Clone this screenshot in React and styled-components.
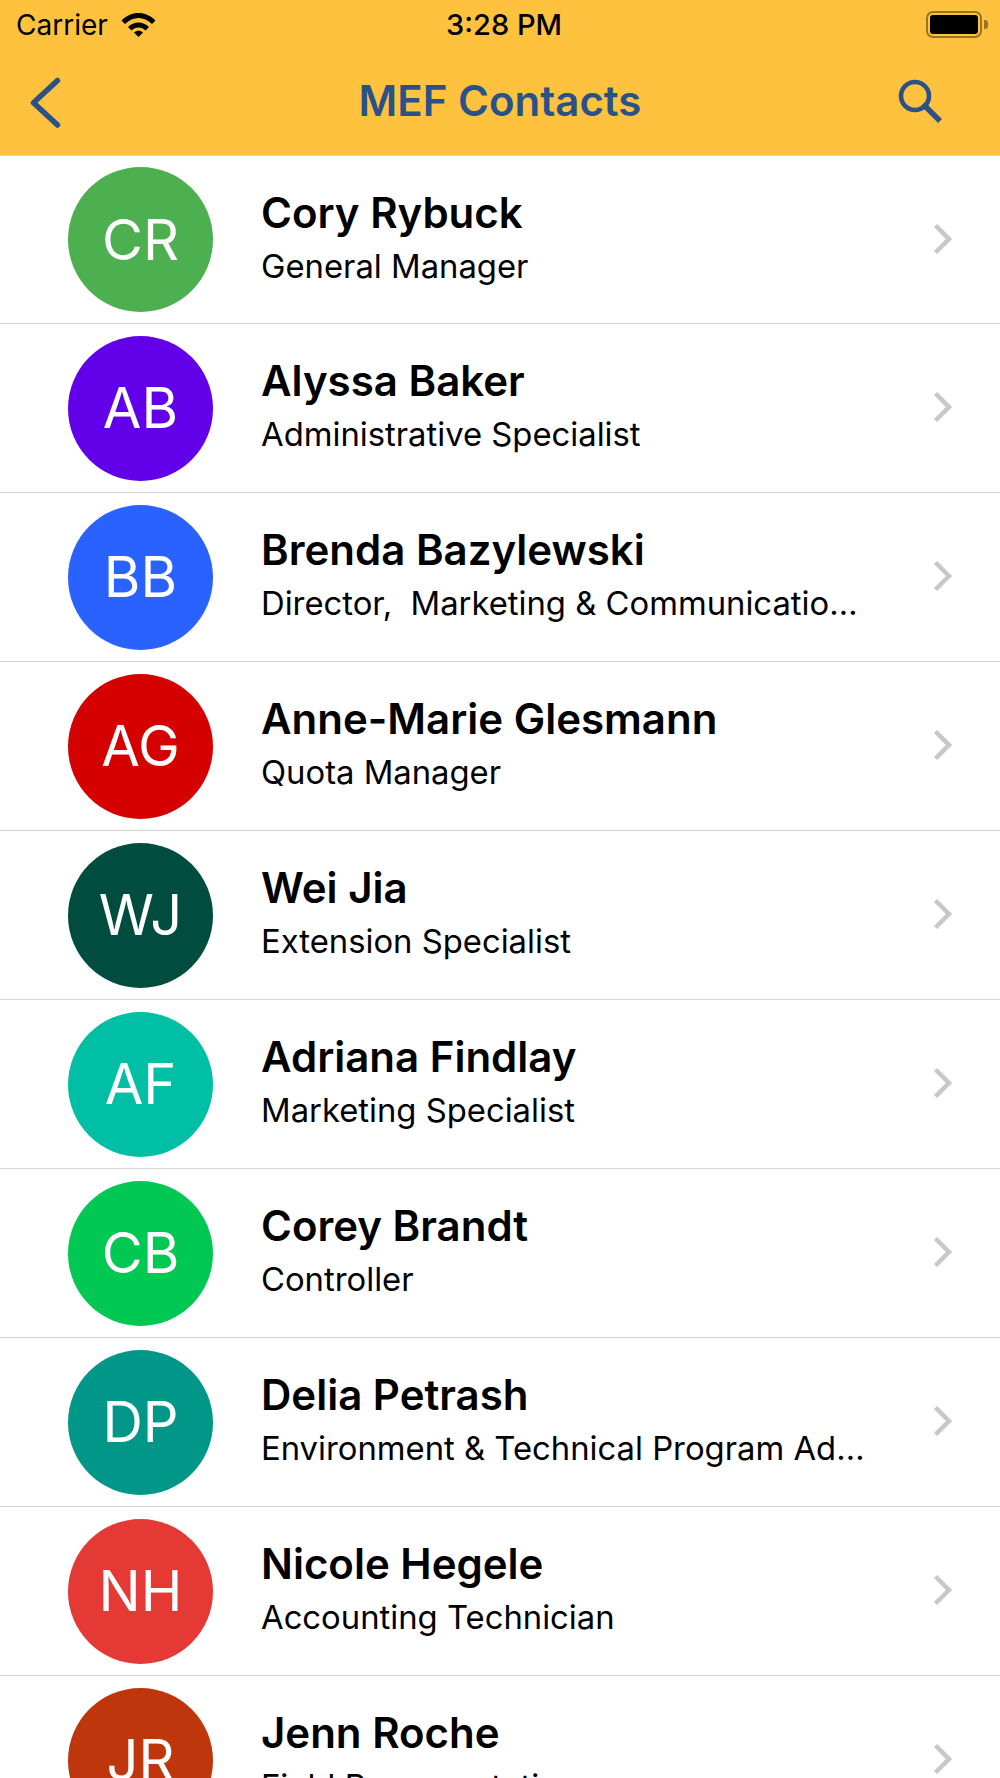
import React from 'react';
import styled, { createGlobalStyle } from 'styled-components';

const GlobalStyle = createGlobalStyle`
  html, body {
    margin: 0;
    height: 100%;
    overflow: hidden;
    background: #ffffff;
    font-family: Inter, "Liberation Sans", sans-serif;
  }
`;

const Screen = styled.div`
  width: 1000px;
  height: 1778px;
  overflow: hidden;
`;

const Header = styled.header`
  height: 155px;
  background: #ffc23f;
  border-bottom: 1px solid #d6d3cb;
`;

const StatusBar = styled.div`
  height: 49px;
  display: grid;
  grid-template-columns: 1fr auto 1fr;
  align-items: center;
  padding: 0 12px 0 16px;
  color: #000000;
`;

const Carrier = styled.div`
  display: flex;
  align-items: center;
  gap: 13px;
  font-size: 28px;
`;

const Clock = styled.div`
  margin-left: 4px;
  font-size: 29px;
  font-weight: 500;
`;

const Battery = styled.div`
  justify-self: end;
  display: flex;
  align-items: center;
  gap: 2px;
`;

const BatteryBody = styled.div`
  box-sizing: border-box;
  width: 56px;
  height: 27px;
  padding: 2px;
  border: 2px solid #9a7526;
  border-radius: 7px;

  &::before {
    content: '';
    display: block;
    height: 100%;
    background: #000000;
    border-radius: 3px;
  }
`;

const BatteryCap = styled.div`
  width: 4px;
  height: 9px;
  background: #9a7526;
  border-radius: 0 3px 3px 0;
`;

const NavBar = styled.nav`
  height: 105px;
  display: grid;
  grid-template-columns: 1fr auto 1fr;
  align-items: center;
  padding: 0 29px 2px;
  box-sizing: border-box;
  color: #2a5289;
`;

const Title = styled.h1`
  margin: 0;
  font-size: 42px;
  font-weight: 600;
`;

const SearchButton = styled.div`
  justify-self: end;
  display: flex;
  margin-right: 29px;
`;

const BackButton = styled.div`
  display: flex;
`;

const List = styled.ul`
  list-style: none;
  margin: 0;
  padding: 0;
`;

const Row = styled.li`
  box-sizing: border-box;
  height: 169px;
  display: flex;
  align-items: center;
  padding: 0 47px 0 68px;
  border-bottom: 1px solid #d4d4d4;

  &:first-child {
    height: 168px;
  }
`;

const Avatar = styled.div`
  flex: none;
  width: 145px;
  height: 145px;
  border-radius: 50%;
  background: ${(p) => p.$color};
  color: #ffffff;
  font-size: 56px;
  display: flex;
  align-items: center;
  justify-content: center;
`;

const Info = styled.div`
  flex: 1;
  min-width: 0;
  margin-left: 48px;
  padding: 0 68px 7px 0;
`;

const Name = styled.div`
  font-size: 42px;
  font-weight: 600;
  line-height: 52px;
  color: #000000;
`;

const Role = styled.div`
  margin-top: 7px;
  font-size: 32.8px;
  line-height: 40px;
  color: #000000;
  white-space: pre;
  overflow: hidden;
  text-overflow: ellipsis;
`;

const Chevron = styled.svg`
  flex: none;
  margin-bottom: 2px;
`;

const contacts = [
  { initials: 'CR', name: 'Cory Rybuck', role: 'General Manager', color: '#4caf50' },
  { initials: 'AB', name: 'Alyssa Baker', role: 'Administrative Specialist', color: '#6200ea' },
  { initials: 'BB', name: 'Brenda Bazylewski', role: 'Director,  Marketing & Communications', color: '#2962ff' },
  { initials: 'AG', name: 'Anne-Marie Glesmann', role: 'Quota Manager', color: '#d50000' },
  { initials: 'WJ', name: 'Wei Jia', role: 'Extension Specialist', color: '#004d40' },
  { initials: 'AF', name: 'Adriana Findlay', role: 'Marketing Specialist', color: '#00bfa5' },
  { initials: 'CB', name: 'Corey Brandt', role: 'Controller', color: '#00c853' },
  { initials: 'DP', name: 'Delia Petrash', role: 'Environment & Technical Program Administrator', color: '#009688' },
  { initials: 'NH', name: 'Nicole Hegele', role: 'Accounting Technician', color: '#e53935' },
  { initials: 'JR', name: 'Jenn Roche', role: 'Field Representative', color: '#bf360c' },
];

const App = () => {
  return (
    <Screen>
      <GlobalStyle />
      <Header>
        <StatusBar>
          <Carrier>
            Carrier
            <svg width="35" height="25" viewBox="0 0 35 25">
              <path d="M0.5 8.5 C10 -1.5 25 -1.5 34.5 8.5 L31 12 C23 4 12 4 4 12 Z" fill="#000" />
              <path d="M7 15 C13 9 22 9 28 15 L24.5 18.5 C20.5 14.5 14.5 14.5 10.5 18.5 Z" fill="#000" />
              <path d="M13 20.5 C15.5 18 19.5 18 22 20.5 L17.5 25 Z" fill="#000" />
            </svg>
          </Carrier>
          <Clock>3:28 PM</Clock>
          <Battery>
            <BatteryBody />
            <BatteryCap />
          </Battery>
        </StatusBar>
        <NavBar>
          <BackButton>
            <svg width="36" height="54" viewBox="0 0 36 54" fill="none">
              <path d="M28.5 6.5 L4.5 28.8 L28.5 51" stroke="#2a5289" strokeWidth="5.5" strokeLinecap="round" strokeLinejoin="round" />
            </svg>
          </BackButton>
          <Title>MEF Contacts</Title>
          <SearchButton>
            <svg width="44" height="44" viewBox="0 0 44 44" fill="none">
              <circle cx="17" cy="17" r="14" stroke="#2a5289" strokeWidth="4.6" />
              <path d="M25 25 L42 42" stroke="#2a5289" strokeWidth="5.5" />
            </svg>
          </SearchButton>
        </NavBar>
      </Header>
      <List>
        {contacts.map((c) => (
          <Row key={c.initials}>
            <Avatar $color={c.color}>{c.initials}</Avatar>
            <Info>
              <Name>{c.name}</Name>
              <Role>{c.role}</Role>
            </Info>
            <Chevron width="20" height="32" viewBox="0 0 20 32" fill="none">
              <path d="M2.5 2.5 L16 16 L2.5 29.5" stroke="#c7c7cc" strokeWidth="4.5" />
            </Chevron>
          </Row>
        ))}
      </List>
    </Screen>
  );
};

export default App;
